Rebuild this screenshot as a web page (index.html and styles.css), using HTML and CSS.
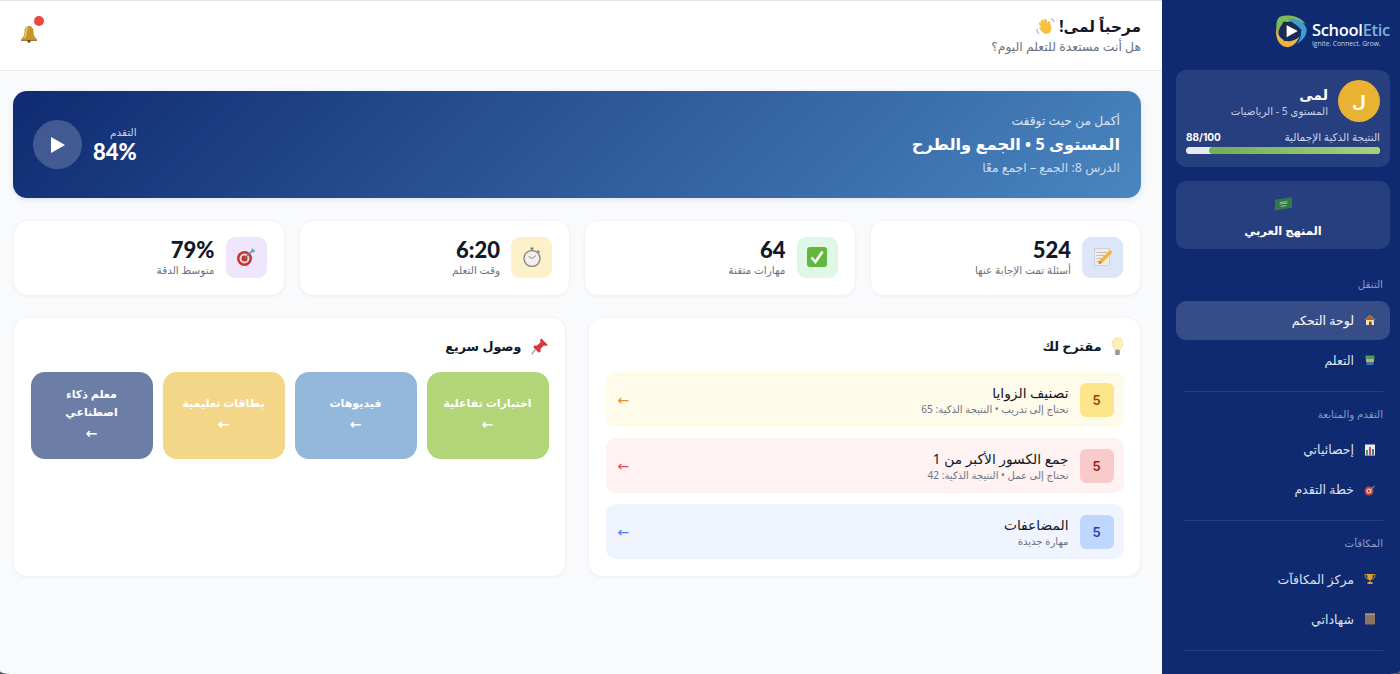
FILE: index.html
```html
<!DOCTYPE html>
<html lang="ar" dir="rtl">
<head>
  <meta charset="UTF-8" />
  <title>SchoolEtic</title>
  <link rel="stylesheet" href="styles.css">
</head>
<body>
  <div class="layout">
    <!-- Sidebar -->
    <aside class="sidebar">
      <div class="logo" dir="ltr">
        <svg class="logo-mark" viewBox="0 0 32 34">
          <path d="M4 2C12-1 24 0 31 9 24 6 15 5 8 9 5 11 3 15 3 20 0 14 0 6 4 2Z" fill="#7dbb57"/>
          <path d="M13 4C22 3 30 7 32 14 33 20 29 26 22 30 27 23 28 16 23 12 20 9 17 7 13 4Z" fill="#3f9bd0"/>
          <path d="M1 13C2 22 8 28 15 27 19 26.500 22 25 25 22 22 29 17 34 11 33 4 32-1 23 1 13Z" fill="#f0b43c"/>
          <path d="M8 7C15 6 23 10 27 16 23 21 15 26 9 27 5 20 5 13 8 7Z" fill="#1b2c4c"/>
          <path d="M11.500 10.500L23 16.500 11.500 23Z" fill="#fff"/>
        </svg>
        <div class="logo-text">
          <div class="logo-name">School<span>Etic</span></div>
          <div class="logo-tag">Ignite. Connect. Grow.</div>
        </div>
      </div>

      <div class="side-card profile">
        <div class="profile-top">
          <div class="avatar">ل</div>
          <div>
            <div class="profile-name">لمى</div>
            <div class="profile-level">المستوى 5 - الرياضيات</div>
          </div>
        </div>
        <div class="score-row">
          <span>النتيجة الذكية الإجمالية</span>
          <b>88/100</b>
        </div>
        <div class="score-bar"><div class="score-fill" style="width: 88%"></div></div>
      </div>

      <div class="side-card curriculum">
        <svg class="flag" viewBox="0 0 20 14">
          <path d="M1 2.500C7 1.500 13 1 19 0V11C13 12 7 12.500 1 14Z" fill="#2f7a45"/>
          <path d="M6 5.500L14 4.500M6 7L14 6M7 9.500L13 8.700" stroke="#b9d6c0" stroke-width=".8" fill="none"/>
        </svg>
        <div class="curriculum-name">المنهج العربي</div>
      </div>

      <nav class="nav">
        <div class="nav-label">التنقل</div>
        <a class="nav-item active">
          <svg class="nav-icon" viewBox="0 0 12 12">
            <path d="M6 1L0.500 6H2V11H10V6H11.500Z" fill="#f3dcae"/>
            <path d="M6 1L0.500 6H11.500Z" fill="#a8623a"/>
            <rect x="5" y="7.500" width="2.500" height="3.500" fill="#7a4a2c"/>
          </svg>
          لوحة التحكم
        </a>
        <a class="nav-item">
          <svg class="nav-icon" viewBox="0 0 12 12">
            <rect x="1.500" y="1.500" width="9" height="3.500" fill="#4f9a5b"/>
            <rect x="2" y="5" width="8" height="3" fill="#c9a86a"/>
            <rect x="2.500" y="8" width="7" height="3" fill="#3f76b5"/>
          </svg>
          التعلم
        </a>
        <hr class="nav-line">

        <div class="nav-label">التقدم والمتابعة</div>
        <a class="nav-item">
          <svg class="nav-icon" viewBox="0 0 12 12">
            <rect x="1" y="0.500" width="10" height="11" fill="#e6edf5"/>
            <rect x="2" y="6" width="2" height="5" fill="#4f9a5b"/>
            <rect x="5" y="3" width="2" height="8" fill="#d14a4a"/>
            <rect x="8" y="5" width="2" height="6" fill="#3f76b5"/>
          </svg>
          إحصائياتي
        </a>
        <a class="nav-item">
          <svg class="nav-icon" viewBox="0 0 12 12">
            <circle cx="5" cy="7" r="4.500" fill="#c2413f"/>
            <circle cx="5" cy="7" r="2.500" fill="#e6c9c4"/>
            <circle cx="5" cy="7" r="1.200" fill="#b5302f"/>
            <path d="M5 7L10.500 2" stroke="#8fc3cf" stroke-width="1"/>
          </svg>
          خطة التقدم
        </a>
        <hr class="nav-line">

        <div class="nav-label">المكافآت</div>
        <a class="nav-item">
          <svg class="nav-icon" viewBox="0 0 12 12">
            <path d="M1 1.500H11C11 4.500 9.500 6 8 6H4C2.500 6 1 4.500 1 1.500Z" fill="none" stroke="#c98f2b" stroke-width="1"/>
            <path d="M3 1H9C9 4.500 7.500 7 6.500 7V9H8.500V11H3.500V9H5.500V7C4.500 7 3 4.500 3 1Z" fill="#d9a02f"/>
          </svg>
          مركز المكافآت
        </a>
        <a class="nav-item">
          <svg class="nav-icon" viewBox="0 0 12 12">
            <rect x="1" y="0.500" width="10" height="11" fill="#8b7263"/>
            <rect x="1" y="0.500" width="10" height="1.500" fill="#b39a88"/>
          </svg>
          شهاداتي
        </a>
        <hr class="nav-line">
      </nav>
    </aside>

    <!-- Main -->
    <main class="main">
      <header class="topbar">
        <div>
          <h1 class="greeting">مرحباً لمى!
            <svg class="wave" viewBox="0 0 20 20">
              <g stroke="#f5c33b" stroke-width="3" stroke-linecap="round" fill="none">
                <path d="M9 12L4.500 7"/>
                <path d="M10 11L6.500 4.500"/>
                <path d="M12 10L9.500 3.500"/>
                <path d="M14 10L13.500 6"/>
              </g>
              <path d="M6 9L15 8C16.500 11 16.500 14 15 16 12 19 8 18 6 15L3 11.500 5 10.500Z" fill="#f5c33b"/>
              <path d="M1 13C1 15 2 17 3.500 18M16 2C17.500 2.500 18.500 3.500 19 5.500" stroke="#8fb6d8" stroke-width="1.200" fill="none"/>
            </svg>
          </h1>
          <p class="greeting-sub">هل أنت مستعدة للتعلم اليوم؟</p>
        </div>
        <div class="bell">
          <svg viewBox="0 0 18 18">
            <path d="M9 1C6 1 4.500 3.500 4.500 6.500C4.500 10 3.500 12 1 14.500H17C14.500 12 13.500 10 13.500 6.500C13.500 3.500 12 1 9 1Z" fill="#c9952a"/>
            <path d="M8 2.500C6.500 3.500 6 5 6 7C6 9.500 5.500 11 4.500 13" stroke="#f4d777" stroke-width="1.200" fill="none"/>
            <path d="M1 14.500H17V15.800H1Z" fill="#7d5a14"/>
            <circle cx="9" cy="16.300" r="1.500" fill="#6d4e10"/>
          </svg>
          <span class="bell-dot"></span>
        </div>
      </header>

      <div class="content">
        <section class="hero">
          <div>
            <div class="hero-kicker">أكمل من حيث توقفت</div>
            <div class="hero-title">المستوى 5 • الجمع والطرح</div>
            <div class="hero-lesson">الدرس 8: الجمع – اجمع معًا</div>
          </div>
          <div class="hero-side">
            <div class="hero-progress">
              <div class="hero-progress-label">التقدم</div>
              <div class="hero-progress-value">84%</div>
            </div>
            <div class="play">
              <svg viewBox="0 0 14 16"><path d="M0 0L14 8 0 16Z" fill="#fff"/></svg>
            </div>
          </div>
        </section>

        <section class="stats">
          <div class="stat">
            <div class="stat-icon blue">
              <svg viewBox="0 0 20 20">
                <rect x="1.500" y="1.500" width="15" height="17" fill="#f1ece2" stroke="#c9c2b8" stroke-width=".6"/>
                <path d="M3.500 5.500H14M3.500 8.500H12M3.500 11.500H9M3.500 14.500H7" stroke="#a7b6c9" stroke-width=".8"/>
                <path d="M17 3L19.500 5.500 9 16 5.500 17 6.500 13.500Z" fill="#eeb63c"/>
                <path d="M5.500 17L6.500 13.500 9 16Z" fill="#d9694a"/>
              </svg>
            </div>
            <div>
              <div class="stat-value">524</div>
              <div class="stat-label">أسئلة تمت الإجابة عنها</div>
            </div>
          </div>
          <div class="stat">
            <div class="stat-icon green">
              <svg viewBox="0 0 20 20">
                <rect x="0" y="0" width="20" height="20" rx="3" fill="#62b83f"/>
                <path d="M4.500 10.500L8.500 15 15.500 4.500" stroke="#fff" stroke-width="2.600" fill="none"/>
              </svg>
            </div>
            <div>
              <div class="stat-value">64</div>
              <div class="stat-label">مهارات متقنة</div>
            </div>
          </div>
          <div class="stat">
            <div class="stat-icon yellow">
              <svg viewBox="0 0 20 20">
                <circle cx="10" cy="11.500" r="8" fill="#f1efe9" stroke="#8b8a86" stroke-width="1.400"/>
                <rect x="8.500" y="0.500" width="3" height="2" fill="#77736d"/>
                <path d="M15.500 3.500L17.500 5.500" stroke="#77736d" stroke-width="1.400"/>
                <path d="M10 11.500L14 8.500M10 11.500L6.500 9.500" stroke="#7a7570" stroke-width=".8"/>
              </svg>
            </div>
            <div>
              <div class="stat-value">6:20</div>
              <div class="stat-label">وقت التعلم</div>
            </div>
          </div>
          <div class="stat">
            <div class="stat-icon purple">
              <svg viewBox="0 0 20 20">
                <circle cx="8.500" cy="11.500" r="7.500" fill="#c9302f"/>
                <circle cx="8.500" cy="11.500" r="5" fill="#ecdcd6"/>
                <circle cx="8.500" cy="11.500" r="3" fill="#c9302f"/>
                <path d="M8.500 11.500L16 4" stroke="#6d7f86" stroke-width="1.200"/>
                <path d="M15 3L17 1 17.500 3 19.500 3.500 17 6Z" fill="#4fb0b8"/>
              </svg>
            </div>
            <div>
              <div class="stat-value">79%</div>
              <div class="stat-label">متوسط الدقة</div>
            </div>
          </div>
        </section>

        <section class="panels">
          <div class="panel">
            <h2 class="panel-title">
              <svg class="panel-icon" viewBox="0 0 12 18">
                <path d="M6 1C2.500 1 1 3.500 1 6C1 9 3 10 3.500 12H8.500C9 10 11 9 11 6C11 3.500 9.500 1 6 1Z" fill="#faf0b8" stroke="#e8d98a" stroke-width=".6"/>
                <rect x="3.800" y="12" width="4.400" height="5" rx="1" fill="#9a968c"/>
              </svg>
              مقترح لك
            </h2>
            <div class="suggestions">
              <div class="suggestion amber">
                <div class="level">5</div>
                <div class="suggestion-body">
                  <div class="suggestion-title">تصنيف الزوايا</div>
                  <div class="suggestion-sub">تحتاج إلى تدريب • النتيجة الذكية: 65</div>
                </div>
                <div class="suggestion-arrow">←</div>
              </div>
              <div class="suggestion red">
                <div class="level">5</div>
                <div class="suggestion-body">
                  <div class="suggestion-title">جمع الكسور الأكبر من 1</div>
                  <div class="suggestion-sub">تحتاج إلى عمل • النتيجة الذكية: 42</div>
                </div>
                <div class="suggestion-arrow">←</div>
              </div>
              <div class="suggestion sky">
                <div class="level">5</div>
                <div class="suggestion-body">
                  <div class="suggestion-title">المضاعفات</div>
                  <div class="suggestion-sub">مهارة جديدة</div>
                </div>
                <div class="suggestion-arrow">←</div>
              </div>
            </div>
          </div>

          <div class="panel">
            <h2 class="panel-title">
              <svg class="panel-icon pin" viewBox="0 0 16 16">
                <path d="M9 1L15 7 13 8 11.500 7.500 8.500 10.500 8.500 13 7 14 2 9 3 7.500 5.500 7.500 8.500 4.500 8 3Z" fill="#d63a3f"/>
                <path d="M4 11L0.500 15.500" stroke="#8a9aa8" stroke-width="1"/>
              </svg>
              وصول سريع
            </h2>
            <div class="shortcuts">
              <a class="shortcut lime">اختبارات تفاعلية<span class="shortcut-arrow">←</span></a>
              <a class="shortcut steel">فيديوهات<span class="shortcut-arrow">←</span></a>
              <a class="shortcut sand">بطاقات تعليمية<span class="shortcut-arrow">←</span></a>
              <a class="shortcut slate">معلم ذكاء اصطناعي<span class="shortcut-arrow">←</span></a>
            </div>
          </div>
        </section>
      </div>
    </main>
  </div>
</body>
</html>
```

FILE: styles.css
```css
/* Reset */
*, *::before, *::after {
  box-sizing: border-box;
}
html, body {
  height: 100%;
}
body {
  margin: 0;
  overflow: hidden;
  font-family: "Noto Sans", "DejaVu Sans", sans-serif;
  background: #4a4e57; /* shows in the window corners */
  color: #111827;
}
h1, h2, p {
  margin: 0;
}
.layout {
  display: flex;
  height: 674px;
  overflow: hidden;
  background: #f8fafc;
  border-radius: 0 0 10px 10px / 0 0 3px 3px;
}

/* Sidebar */
.sidebar {
  width: 238px;
  flex: none;
  background: #0f2a70;
  padding: 15px 10px 0 14px;
  overflow: hidden;
  color: #fff;
}
.logo {
  display: flex;
  align-items: center;
  justify-content: flex-end;
  gap: 5px;
  height: 33px;
  margin-bottom: 22px;
}
.logo-mark {
  width: 32px;
  height: 33px;
}
.logo-text {
  margin-top: 5px;
}
.logo-name {
  font-family: "Open Sans", sans-serif;
  font-size: 16.500px;
  font-weight: 600;
  line-height: 18px;
  letter-spacing: -0.3px;
}
.logo-name span {
  color: #7fb1d8;
}
.logo-tag {
  font-family: "Open Sans", sans-serif;
  font-size: 6.700px;
  line-height: 9px;
  color: #c9d6e8;
}
.side-card {
  background: rgba(255, 255, 255, 0.1);
  border-radius: 10px;
}
.profile {
  height: 97px;
  padding: 10px 10px 0 10px;
  margin-bottom: 14px;
}
.profile-top {
  display: flex;
  align-items: center;
  gap: 10px;
}
.avatar {
  width: 42px;
  height: 42px;
  border-radius: 50%;
  background: #eab233;
  display: flex;
  align-items: center;
  justify-content: center;
  font-size: 16px;
  font-weight: 700;
}
.profile-name {
  font-size: 14px;
  font-weight: 700;
  line-height: 19px;
}
.profile-level {
  font-size: 10.300px;
  line-height: 14px;
  color: #c6d0e6;
}
.score-row {
  display: flex;
  justify-content: space-between;
  align-items: center;
  margin-top: 8px;
  font-size: 10.500px;
  line-height: 14px;
  color: #cdd6ea;
}
.score-row b {
  font-family: Inter, sans-serif;
  font-size: 10px;
  color: #fff;
}
.score-bar {
  height: 7px;
  margin-top: 3px;
  border-radius: 4px;
  background: #e8ebf0;
  overflow: hidden;
}
.score-fill {
  height: 100%;
  border-radius: 4px;
  background: linear-gradient(to left, #a9d27a, #6fae57);
}
.curriculum {
  height: 68px;
  padding-top: 16px;
  text-align: center;
}
.flag {
  display: block;
  width: 19px;
  height: 14px;
  margin: 0 auto 11px;
}
.curriculum-name {
  font-size: 11.500px;
  font-weight: 700;
  line-height: 18px;
}
.nav {
  margin-top: 27px;
}
.nav-label {
  height: 16px;
  margin: 0 7px 9px 7px;
  font-size: 10.300px;
  line-height: 16px;
  color: #8b9cc6;
}
.nav-item {
  display: flex;
  align-items: center;
  gap: 10px;
  height: 38.500px;
  padding: 0 14px;
  margin-bottom: 1.500px;
  border-radius: 10px;
  font-size: 12.500px;
  color: #dbe2f0;
}
.nav-item.active {
  background: rgba(255, 255, 255, 0.17);
  color: #fff;
}
.nav-icon {
  width: 12px;
  height: 12px;
  flex: none;
}
.nav-line {
  height: 1px;
  border: 0;
  margin: 11px 7px 14px 7px;
  background: rgba(255, 255, 255, 0.1);
}

/* Main */
.main {
  flex: 1;
  min-width: 0;
  border-top: 1px solid #e2e5ea;
}
.topbar {
  display: flex;
  justify-content: space-between;
  align-items: center;
  height: 70px;
  padding: 0 21px 0 20px;
  background: #fff;
  border-bottom: 1px solid #e9edf2;
}
.greeting {
  display: flex;
  align-items: center;
  gap: 4px;
  font-size: 15.300px;
  font-weight: 700;
  line-height: 23px;
}
.wave {
  width: 19px;
  height: 19px;
}
.greeting-sub {
  font-size: 12.400px;
  line-height: 18px;
  color: #6b7280;
}
.bell {
  position: relative;
  width: 18px;
  height: 18px;
  margin-top: -3px;
}
.bell svg {
  display: block;
  width: 18px;
  height: 18px;
}
.bell-dot {
  position: absolute;
  top: -9px;
  left: 14px;
  width: 10px;
  height: 10px;
  border-radius: 50%;
  background: #ef4444;
}
.content {
  padding: 20px 21px 0 13px;
}
.hero {
  display: flex;
  justify-content: space-between;
  align-items: center;
  height: 107px;
  padding: 0 21px 0 20px;
  border-radius: 14px;
  background: linear-gradient(135deg, #0f2a72, #4a86c0);
  color: #fff;
  box-shadow: 0 2px 6px rgba(15, 42, 114, 0.1);
}
.hero-kicker {
  font-size: 12.300px;
  line-height: 18px;
  color: #dce6f3;
}
.hero-title {
  font-size: 16.300px;
  font-weight: 700;
  line-height: 29px;
}
.hero-lesson {
  font-size: 12.400px;
  line-height: 18px;
  color: #cfdcec;
}
.hero-side {
  display: flex;
  align-items: center;
  gap: 11px;
}
.hero-progress-label {
  font-size: 10.500px;
  line-height: 14px;
  color: #c6d3e6;
}
.hero-progress-value {
  font-family: Lato, sans-serif;
  font-size: 22px;
  font-weight: 900;
  line-height: 25px;
  direction: ltr;
}
.play {
  width: 49px;
  height: 49px;
  border-radius: 50%;
  background: rgba(255, 255, 255, 0.2);
  display: flex;
  align-items: center;
  justify-content: center;
}
.play svg {
  display: block;
  width: 14px;
  height: 16px;
}
.stats {
  display: grid;
  grid-template-columns: repeat(4, 1fr);
  gap: 14px;
  margin-top: 22px;
}
.stat {
  display: flex;
  align-items: center;
  gap: 11px;
  height: 76px;
  padding: 0 17px 2px 17px;
  background: #fff;
  border-radius: 14px;
  border: 1px solid #f1f3f6;
  box-shadow: 0 1px 3px rgba(17, 24, 39, 0.04);
}
.stat-icon {
  width: 41px;
  height: 41px;
  border-radius: 9px;
  display: flex;
  align-items: center;
  justify-content: center;
  flex: none;
}
.stat-icon svg {
  width: 20px;
  height: 20px;
}
.stat-icon.blue { background: #dbe6f8; }
.stat-icon.green { background: #dff7e5; }
.stat-icon.yellow { background: #fcf1c8; }
.stat-icon.purple { background: #efe6fb; }
.stat-value {
  font-family: Lato, sans-serif;
  font-size: 22px;
  font-weight: 900;
  line-height: 26px;
  color: #111827;
}
.stat-label {
  font-size: 10.500px;
  line-height: 15px;
  color: #6b7280;
}
.panels {
  display: grid;
  grid-template-columns: 1fr 1fr;
  gap: 22px;
  margin-top: 21px;
}
.panel {
  height: 260px;
  padding: 17px 16.500px;
  background: #fff;
  border-radius: 14px;
  border: 1px solid #f1f3f6;
  box-shadow: 0 1px 3px rgba(17, 24, 39, 0.04);
}
.panel-title {
  display: flex;
  align-items: center;
  gap: 9px;
  height: 22px;
  font-size: 12.700px;
  font-weight: 700;
}
.panel-icon {
  width: 13px;
  height: 19px;
}
.panel-icon.pin {
  width: 18px;
  height: 18px;
}
.suggestions {
  display: flex;
  flex-direction: column;
  gap: 11px;
  margin-top: 15px;
}
.suggestion {
  display: flex;
  align-items: center;
  gap: 11px;
  height: 55px;
  padding: 0 10px 0 12px;
  border-radius: 10px;
}
.suggestion.amber { background: #fffbeb; }
.suggestion.red { background: #fef2f2; }
.suggestion.sky { background: #eff4fe; }
.level {
  width: 34px;
  height: 34px;
  border-radius: 6px;
  display: flex;
  align-items: center;
  justify-content: center;
  font-family: Inter, sans-serif;
  font-size: 13px;
  font-weight: 600;
  flex: none;
}
.amber .level { background: #fde68a; color: #92400e; }
.red .level { background: #f8caca; color: #991b1b; }
.sky .level { background: #bfd7fd; color: #1e40af; }
.suggestion-body {
  flex: 1;
}
.suggestion-title {
  font-size: 13.800px;
  line-height: 19px;
  color: #111827;
}
.suggestion-sub {
  font-size: 10.100px;
  line-height: 15px;
  color: #6b7280;
}
.suggestion-arrow {
  font-size: 14px;
  opacity: 0.8;
}
.amber .suggestion-arrow { color: #d97706; }
.red .suggestion-arrow { color: #dc2626; }
.sky .suggestion-arrow { color: #2563eb; }
.shortcuts {
  display: grid;
  grid-template-columns: repeat(4, 1fr);
  gap: 10px;
  margin-top: 15px;
}
.shortcut {
  display: flex;
  flex-direction: column;
  align-items: center;
  justify-content: center;
  height: 87px;
  padding: 0 12px 4px;
  border-radius: 14px;
  font-size: 11px;
  font-weight: 700;
  line-height: 18px;
  text-align: center;
  color: #fff;
}
.shortcut-arrow {
  margin-top: 3px;
  font-size: 14px;
}
.shortcut.lime { background: #b2d577; }
.shortcut.steel { background: #94b8dc; }
.shortcut.sand { background: #f4d688; }
.shortcut.slate { background: #6c7da6; }
```
